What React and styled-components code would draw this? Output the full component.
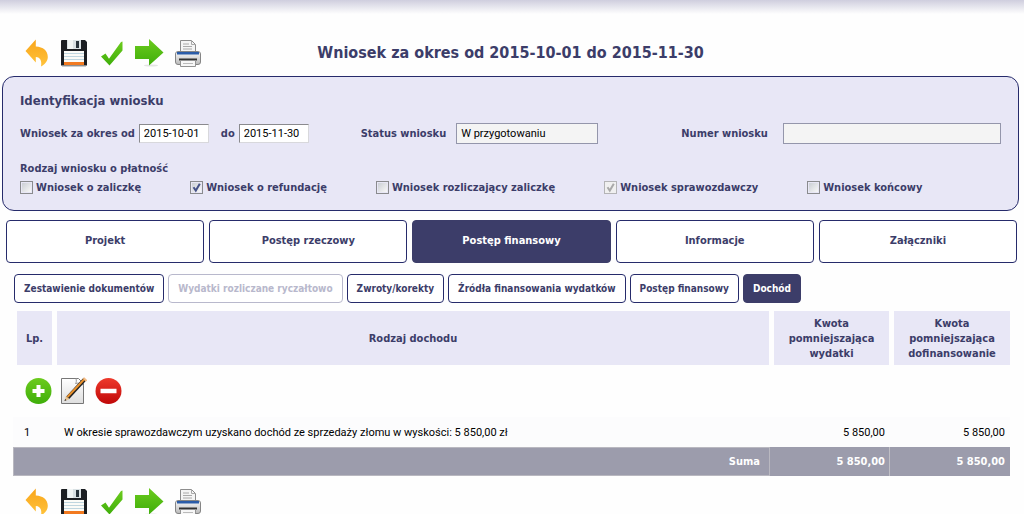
import React from 'react';
import styled, { createGlobalStyle, css } from 'styled-components';

const colors = {
  page: '#fefefe',
  navy: '#3c3d69',
  border: '#262b6b',
  lavender: '#e8e7f6',
  muted: '#b8b8cc',
  sum: '#9c9cac',
};

const bold = '"DejaVu Sans Condensed", "DejaVu Sans", sans-serif';
const plain = 'Roboto, "Noto Sans", sans-serif';

const GlobalStyle = createGlobalStyle`
  * {
    box-sizing: border-box;
  }

  body {
    margin: 0;
    background: ${colors.page};
    color: ${colors.navy};
    font: bold 11px/15px ${bold};
  }

  button,
  input {
    margin: 0;
    font: inherit;
    color: inherit;
  }
`;

const Page = styled.div`
  background: linear-gradient(#cfcede, ${colors.page}) no-repeat 0 0 / 100% 14px;
`;

const Header = styled.header`
  display: grid;
  grid-template-columns: 1fr auto 1fr;
  align-items: center;
  height: 76px;
  padding: 30px 5px 0 2px;
`;

const Title = styled.h1`
  margin: 0;
  font-size: 16px;
  line-height: 20px;
`;

const Toolbar = styled.div`
  display: flex;
  align-items: center;
  gap: 8px;
  padding-left: ${props => props.$inset}px;
`;

const IconButton = styled.button`
  display: flex;
  padding: 0;
  border: 0;
  background: none;
`;

const Panel = styled.section`
  margin: 0 5px 0 2px;
  padding: 16px 17px 15px 17px;
  border: 1px solid ${colors.border};
  border-radius: 12px;
  background: ${colors.lavender};
`;

const PanelTitle = styled.h2`
  margin: 0 0 14px;
  font-size: 13px;
  line-height: 16px;
`;

const Fields = styled.div`
  display: grid;
  grid-template-columns: 341fr 321fr 320fr;
  align-items: center;
  margin-bottom: 17px;
`;

const Field = styled.div`
  display: flex;
  align-items: center;
`;

const DateInput = styled.input`
  width: 70px;
  height: 19px;
  margin: 0 12px 0 4px;
  padding: 0 4px;
  border: 1px solid #d8d8dc;
  border-top-color: #8a8a8e;
  border-left-color: #8a8a8e;
  background: #fff;
  color: #000;
  font: 11px ${plain};
`;

const ReadOnlyInput = styled.input`
  ${props => (props.$grow ? 'flex: 1; min-width: 0;' : 'width: 142px;')}
  height: 21px;
  margin-left: ${props => (props.$grow ? 15 : 10)}px;
  padding: 0 4px;
  border: 1px solid #9496ab;
  background: #f4f4f4;
  color: #000;
  font: 11px ${plain};
`;

const Checks = styled.fieldset`
  display: flex;
  gap: 49px;
  margin: 0;
  padding: 0;
  border: 0;
`;

const Legend = styled.legend`
  margin-bottom: 4px;
  padding: 0;
`;

const Check = styled.label`
  display: flex;
  align-items: center;
  gap: 3px;
  white-space: nowrap;
`;

const tick = encodeURIComponent('<svg xmlns="http://www.w3.org/2000/svg" width="11" height="11"><path d="M2.5 5.2 4.8 8.6 8.8 1.8" fill="none" stroke="#455188" stroke-width="2"/></svg>');
const greyTick = tick.replace('455188', 'a9a9a9');

const Box = styled.input`
  appearance: none;
  width: 13px;
  height: 13px;
  border: 1px solid #8a8b8e;
  background: linear-gradient(135deg, #cbcfd5, #f8f8f8) content-box #f3f3f3;
  padding: 1px;

  &:checked {
    background: url("data:image/svg+xml,${tick}") center no-repeat border-box, linear-gradient(135deg, #cbcfd5, #f8f8f8) content-box #f3f3f3;
  }

  &:disabled {
    border-color: #b4b4b6;
    background: url("data:image/svg+xml,${greyTick}") center no-repeat border-box, #f0f0f0;
  }
`;

const Tabs = styled.nav`
  display: flex;
  gap: 5px;
  padding: 9px 7px 0 6px;
`;

const activeTab = css`
  background: ${colors.navy};
  border-color: ${colors.navy};
  color: #fff;
`;

const Tab = styled.button`
  flex: 1 1 0;
  height: 43px;
  padding: 0 0 3px;
  border: 1px solid ${colors.border};
  border-radius: 4px;
  background: #fff;
  ${props => props.$active && activeTab}
`;

const SubTabs = styled.nav`
  display: flex;
  gap: 4px;
  padding: 11px 14px 8px;
`;

const SubTab = styled.button`
  height: 29px;
  padding: 0 9px;
  border: 1px solid ${colors.border};
  border-radius: 4px;
  background: #fff;
  font-size: 10px;
  white-space: nowrap;
  ${props => props.$active && activeTab}

  &:disabled {
    border-color: ${colors.muted};
    color: ${colors.muted};
  }
`;

const TableArea = styled.div`
  padding: 0 14px 0 13px;
`;

const Table = styled.table`
  width: 100%;
  table-layout: fixed;
  border-spacing: 0;
`;

const Col = styled.col`
  width: ${props => props.$width};
`;

const HeadCell = styled.th`
  height: 54px;
  padding: 0;
  border: solid ${colors.page};
  border-width: 0 1px 0 4px;
  background: ${colors.lavender};

  &:last-child {
    border-right: 0;
  }
`;

const ActionsCell = styled.td`
  height: 52px;
  padding: 0;
`;

const Cell = styled.td`
  height: 30px;
  padding: ${props => (props.$amount ? '0 5px 0 0' : '0 0 0 11px')};
  background: #fcfcfd;
  color: #000;
  font: 11px ${plain};
  text-align: ${props => (props.$amount ? 'right' : 'left')};
`;

const SumCell = styled.td`
  height: 29px;
  padding: 0 4px 0 0;
  border-right: 1px solid #c0bfc5;
  background: ${colors.sum};
  color: #fff;
  text-align: right;

  &:first-child {
    padding-right: 9px;
    border: 1px solid #b9b8c0;
  }

  &:last-child {
    padding-right: 5px;
    border-right: 0;
  }
`;

const Footer = styled.footer`
  padding: 10px 2px 0;
`;

const Gradients = styled.svg`
  display: block;
  width: 0;
  height: 0;
`;

const Ramp = ({ id, from, to }) => (
  <linearGradient id={id} x1="0" y1="0" x2="0" y2="1">
    <stop offset="0" stopColor={from} />
    <stop offset="1" stopColor={to} />
  </linearGradient>
);

const Undo = () => (
  <svg width="28" height="32" viewBox="0 0 28 32">
    <path d="M2.500 14 12.800 2.500v7c7.500 .3 12 4.500 12 10.500 0 4-3 7.500-6.800 9.500 1-5.500-.5-9.300-5.200-9.500v5.500z" fill="url(#orange)" />
  </svg>
);

const Save = () => (
  <svg width="30" height="32" viewBox="0 0 30 32">
    <path d="M2 4q0-1 1-1h23l2 2v23.500H2z" fill="#1b1e22" />
    <path d="M8 3h14v9H8z" fill="#d9e1e4" />
    <path d="M9 3h5v9H9z" fill="#f1f5f5" />
    <path d="M17 4h3v7h-3z" fill="#28333b" />
    <path d="M5 14h20v13H5z" fill="#fbfbf7" />
    <path d="M5 16.500h20M5 19.500h20M5 22.500h20" stroke="#bfd6df" />
    <path d="M5 25h20v3H5z" fill="#f27a20" />
    <path d="M3 29.500h24" stroke="#ccc" />
  </svg>
);

const Tick = () => (
  <svg width="28" height="32" viewBox="0 0 28 32">
    <path d="M4 19.500 8.500 16.500l3.500 5.200L24 5l1.500-.5v9L12.500 28.500z" fill="url(#green)" />
  </svg>
);

const Arrow = () => (
  <svg width="32" height="32" viewBox="0 0 32 32">
    <ellipse cx="18" cy="28.500" rx="7" ry="1" fill="#e4e4e4" />
    <path d="M2 9h14V2l14.500 13.500L16 28.500V22H2z" fill="url(#green)" />
  </svg>
);

const Print = () => (
  <svg width="30" height="32" viewBox="0 0 30 32">
    <path d="M7.500 15V3.500h11l4 4V15z" fill="#f5f5f5" stroke="#8d8d8d" />
    <path d="M18.500 3.500v4h4M10 7h6M10 9.500h9M10 12h9" fill="none" stroke="#aaa" />
    <rect x="2.500" y="14.500" width="25" height="13" rx="2.500" fill="url(#silver)" stroke="#858585" />
    <path d="M4 15h22v2.500H4z" fill="#2b5ca8" />
    <path d="M6 22.500h18" stroke="#333" strokeWidth="2" />
    <path d="M7.500 23.500h15v6h-15z" fill="#f7f7f7" stroke="#929292" />
    <path d="M10 26.500h10" stroke="#bbb" />
  </svg>
);

const Add = () => (
  <svg width="27" height="28" viewBox="0 0 27 28">
    <circle cx="13.500" cy="14" r="13" fill="url(#green)" />
    <path d="M13.500 8v12M7.500 14h12" stroke="#fff" strokeWidth="4" />
  </svg>
);

const Edit = () => (
  <svg width="27" height="28" viewBox="0 0 27 28">
    <path d="M1.500 1.500h17l5 5v20h-22z" fill="url(#paper)" stroke="#777" />
    <path d="M16 1.500c.5 2 .5 4-.5 5 3-1 6 0 8 2" fill="#fff" stroke="#999" />
    <path d="M7.500 21 25 2" stroke="#222" strokeWidth="4" />
    <path d="M7.500 20 24 2.500" stroke="#e9912c" strokeWidth="2" />
    <path d="m23.500 1 3 3" stroke="#f3b981" strokeWidth="2" />
    <path d="m4.500 24 1.500-5 3.500 3z" fill="#e8c28f" />
    <path d="m4.500 24 .6-2 1.400 1.200z" fill="#222" />
  </svg>
);

const Remove = () => (
  <svg width="27" height="28" viewBox="0 0 27 28">
    <circle cx="13.500" cy="14" r="13" fill="url(#red)" />
    <path d="M5.500 14h16" stroke="#fff" strokeWidth="4.500" />
  </svg>
);

const pageActions = [
  { name: 'Wstecz', Icon: Undo },
  { name: 'Zapisz', Icon: Save },
  { name: 'Sprawdź', Icon: Tick },
  { name: 'Dalej', Icon: Arrow },
  { name: 'Drukuj', Icon: Print },
];

const rowActions = [
  { name: 'Dodaj', Icon: Add },
  { name: 'Edytuj', Icon: Edit },
  { name: 'Usuń', Icon: Remove },
];

const kinds = [
  { label: 'Wniosek o zaliczkę' },
  { label: 'Wniosek o refundację', checked: true },
  { label: 'Wniosek rozliczający zaliczkę' },
  { label: 'Wniosek sprawozdawczy', checked: true, disabled: true },
  { label: 'Wniosek końcowy' },
];

const tabs = ['Projekt', 'Postęp rzeczowy', 'Postęp finansowy', 'Informacje', 'Załączniki'];

const subTabs = [
  { label: 'Zestawienie dokumentów' },
  { label: 'Wydatki rozliczane ryczałtowo', disabled: true },
  { label: 'Zwroty/korekty' },
  { label: 'Źródła finansowania wydatków' },
  { label: 'Postęp finansowy' },
  { label: 'Dochód', active: true },
];

const rows = [
  {
    text: 'W okresie sprawozdawczym uzyskano dochód ze sprzedaży złomu w wyskości: 5 850,00 zł',
    expenses: '5 850,00',
    funding: '5 850,00',
  },
];

const Actions = ({ items, inset }) => (
  <Toolbar $inset={inset}>
    {items.map(({ name, Icon }) => (
      <IconButton key={name} type="button" aria-label={name}>
        <Icon />
      </IconButton>
    ))}
  </Toolbar>
);

const App = () => (
  <Page>
    <GlobalStyle />
    <Gradients aria-hidden="true">
      <Ramp id="orange" from="#f9a51a" to="#ffc33c" />
      <Ramp id="green" from="#6ccb1e" to="#3fae0a" />
      <Ramp id="red" from="#ee3a2c" to="#c00808" />
      <Ramp id="silver" from="#fafafa" to="#b9b9b9" />
      <Ramp id="paper" from="#ffffff" to="#dedede" />
    </Gradients>
    <Header>
      <Actions items={pageActions} inset={21} />
      <Title>Wniosek za okres od 2015-10-01 do 2015-11-30</Title>
    </Header>
    <Panel>
      <PanelTitle>Identyfikacja wniosku</PanelTitle>
      <Fields>
        <Field>
          <label htmlFor="from">Wniosek za okres od</label>
          <DateInput id="from" defaultValue="2015-10-01" />
          <label htmlFor="to">do</label>
          <DateInput id="to" defaultValue="2015-11-30" />
        </Field>
        <Field>
          <label htmlFor="status">Status wniosku</label>
          <ReadOnlyInput id="status" readOnly value="W przygotowaniu" />
        </Field>
        <Field>
          <label htmlFor="number">Numer wniosku</label>
          <ReadOnlyInput id="number" readOnly $grow />
        </Field>
      </Fields>
      <Checks>
        <Legend>Rodzaj wniosku o płatność</Legend>
        {kinds.map(kind => (
          <Check key={kind.label}>
            <Box type="checkbox" defaultChecked={kind.checked} disabled={kind.disabled} />
            {kind.label}
          </Check>
        ))}
      </Checks>
    </Panel>
    <Tabs>
      {tabs.map(tab => (
        <Tab key={tab} type="button" $active={tab === 'Postęp finansowy'}>{tab}</Tab>
      ))}
    </Tabs>
    <SubTabs>
      {subTabs.map(({ label, active, disabled }) => (
        <SubTab key={label} type="button" $active={active} disabled={disabled}>{label}</SubTab>
      ))}
    </SubTabs>
    <TableArea>
      <Table>
        <colgroup>
          <Col $width="40px" />
          <Col $width="auto" />
          <Col $width="120px" />
          <Col $width="120px" />
        </colgroup>
        <thead>
          <tr>
            <HeadCell>Lp.</HeadCell>
            <HeadCell>Rodzaj dochodu</HeadCell>
            <HeadCell>Kwota pomniejszająca wydatki</HeadCell>
            <HeadCell>Kwota pomniejszająca dofinansowanie</HeadCell>
          </tr>
        </thead>
        <tbody>
          <tr>
            <ActionsCell colSpan={4}>
              <Actions items={rowActions} inset={12} />
            </ActionsCell>
          </tr>
          {rows.map((row, index) => (
            <tr key={row.text}>
              <Cell>{index + 1}</Cell>
              <Cell>{row.text}</Cell>
              <Cell $amount>{row.expenses}</Cell>
              <Cell $amount>{row.funding}</Cell>
            </tr>
          ))}
        </tbody>
        <tfoot>
          <tr>
            <SumCell colSpan={2}>Suma</SumCell>
            <SumCell>5 850,00</SumCell>
            <SumCell>5 850,00</SumCell>
          </tr>
        </tfoot>
      </Table>
    </TableArea>
    <Footer>
      <Actions items={pageActions} inset={21} />
    </Footer>
  </Page>
);

export default App;
